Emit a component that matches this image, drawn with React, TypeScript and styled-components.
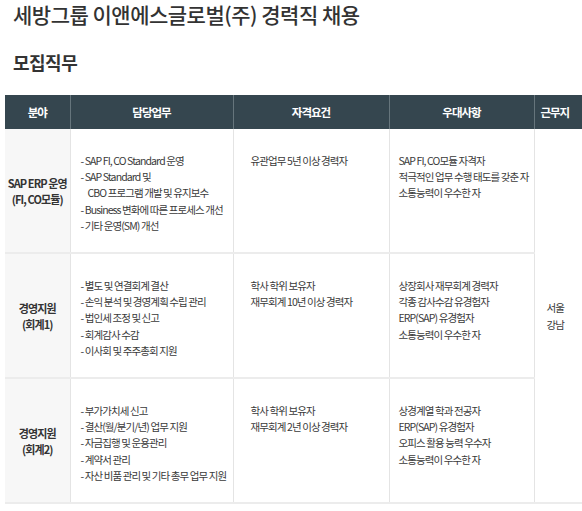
import React from "react";
import styled, { createGlobalStyle } from "styled-components";

const Global = createGlobalStyle`
  html, body { margin: 0; padding: 0; background: #fff; }
  body {
    font-family: "Noto Sans CJK KR", "Noto Sans", sans-serif;
    color: #333;
    overflow: hidden;
  }
`;

const Page = styled.div`
  width: 582px;
  height: 511px;
  overflow: hidden;
`;

const Title = styled.h1`
  margin: 0;
  padding: 0 0 0 13px;
  font-size: 21px;
  line-height: 28px;
  font-weight: 500;
  letter-spacing: -0.5px;
  color: #333;
  white-space: nowrap;
`;

const Section = styled.h2`
  margin: 21px 0 0;
  padding-left: 13px;
  font-size: 18px;
  line-height: 27px;
  font-weight: 700;
  letter-spacing: -0.5px;
  color: #333;
`;

const Table = styled.table`
  margin: 19px 0 0 5px;
  border-collapse: collapse;
  table-layout: fixed;
  width: 590px;
  font-size: 10.5px;
  letter-spacing: -0.9px;
  color: #3a3a3a;
`;

const HeadCell = styled.th<{ $last?: boolean }>`
  height: 34px;
  padding: ${(p) => (p.$last ? "0 20px 0 0" : "0")};
  background: #35464f;
  color: #fff;
  font-size: 11.5px;
  font-weight: 700;
  letter-spacing: -1px;
  text-align: center;
  border-left: 1px solid #66757c;
  &:first-child { border-left: none; }
`;

const Row = styled.tr`
  border-bottom: 2px solid #ececec;
`;

const FieldCell = styled.td`
  background: #f7f7f7;
  text-align: center;
  vertical-align: middle;
  font-weight: 700;
  font-size: 11px;
  line-height: 16px;
  color: #333;
  padding: 0;
`;

const TextCell = styled.td<{ $padLeft: number }>`
  vertical-align: top;
  text-align: left;
  padding: 24px 4px 18px ${(p) => p.$padLeft}px;
  line-height: 16.2px;
  border-left: 1px solid #e4e4e4;
  white-space: nowrap;
`;

const PlaceCell = styled.td`
  vertical-align: middle;
  text-align: center;
  padding: 0 19px 0 0;
  line-height: 17px;
  border-left: 1px solid #e4e4e4;
  color: #3a3a3a;
`;

const Item = styled.div`
  padding-left: 7px;
  text-indent: -7px;
`;

const Line = styled.div``;

type Job = {
  field: string[];
  duties: React.ReactNode[];
  reqs: string[];
  prefs: string[];
};

const jobs: Job[] = [
  {
    field: ["SAP ERP 운영", "(FI, CO모듈)"],
    duties: [
      "- SAP FI, CO Standard 운영",
      <>
        - SAP Standard 및
        <br />
        CBO 프로그램 개발 및 유지보수
      </>,
      "- Business 변화에 따른 프로세스 개선",
      "- 기타 운영(SM) 개선",
    ],
    reqs: ["유관업무 5년 이상 경력자"],
    prefs: ["SAP FI, CO모듈 자격자", "적극적인 업무 수행 태도를 갖춘 자", "소통능력이 우수한 자"],
  },
  {
    field: ["경영지원", "(회계1)"],
    duties: [
      "- 별도 및 연결회계 결산",
      "- 손익 분석 및 경영계획 수립 관리",
      "- 법인세 조정 및 신고",
      "- 회계감사 수감",
      "- 이사회 및 주주총회 지원",
    ],
    reqs: ["학사 학위 보유자", "재무회계 10년 이상 경력자"],
    prefs: ["상장회사 재무회계 경력자", "각종 감사수감 유경험자", "ERP(SAP) 유경험자", "소통능력이 우수한 자"],
  },
  {
    field: ["경영지원", "(회계2)"],
    duties: [
      "- 부가가치세 신고",
      "- 결산(월/분기/년) 업무 지원",
      "- 자금집행 및 운용관리",
      "- 계약서 관리",
      "- 자산 비품 관리 및 기타 총무 업무 지원",
    ],
    reqs: ["학사 학위 보유자", "재무회계 2년 이상 경력자"],
    prefs: ["상경계열 학과 전공자", "ERP(SAP) 유경험자", "오피스 활용 능력 우수자", "소통능력이 우수한 자"],
  },
];

export default function App() {
  return (
    <Page>
      <Global />
      <Title>세방그룹 이앤에스글로벌(주) 경력직 채용</Title>
      <Section>모집직무</Section>
      <Table>
        <colgroup>
          <col style={{ width: 65 }} />
          <col style={{ width: 163 }} />
          <col style={{ width: 156 }} />
          <col style={{ width: 145 }} />
          <col style={{ width: 61 }} />
        </colgroup>
        <thead>
          <tr>
            <HeadCell>분야</HeadCell>
            <HeadCell>담당업무</HeadCell>
            <HeadCell>자격요건</HeadCell>
            <HeadCell>우대사항</HeadCell>
            <HeadCell $last>근무지</HeadCell>
          </tr>
        </thead>
        <tbody>
          {jobs.map((job, i) => (
            <Row key={i}>
              <FieldCell>
                {job.field.map((f) => (
                  <Line key={f}>{f}</Line>
                ))}
              </FieldCell>
              <TextCell $padLeft={10}>
                {job.duties.map((d, j) => (
                  <Item key={j}>{d}</Item>
                ))}
              </TextCell>
              <TextCell $padLeft={17}>
                {job.reqs.map((r) => (
                  <Line key={r}>{r}</Line>
                ))}
              </TextCell>
              <TextCell $padLeft={9}>
                {job.prefs.map((p) => (
                  <Line key={p}>{p}</Line>
                ))}
              </TextCell>
              {i === 0 && (
                <PlaceCell rowSpan={3}>
                  <Line>서울</Line>
                  <Line>강남</Line>
                </PlaceCell>
              )}
            </Row>
          ))}
        </tbody>
      </Table>
    </Page>
  );
}
